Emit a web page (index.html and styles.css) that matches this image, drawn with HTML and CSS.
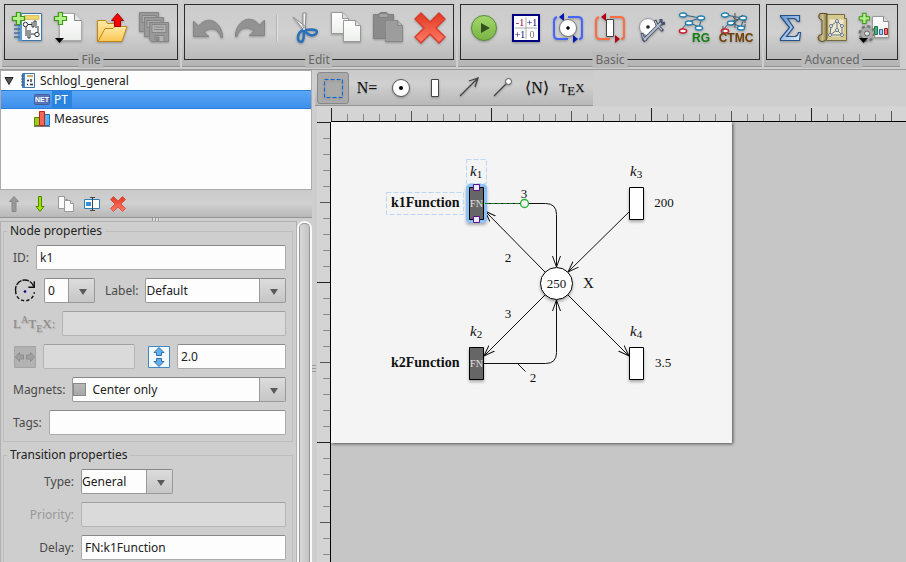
FILE: index.html
```html
<!DOCTYPE html>
<html lang="en">
<head>
<meta charset="utf-8">
<title>Schlogl_general</title>
<link rel="stylesheet" href="styles.css">
</head>
<body>
<svg class="defs" aria-hidden="true">
  <defs>
    <linearGradient id="gPaper" x1="0" y1="0" x2="0" y2="1"><stop offset="0" stop-color="#fff"/><stop offset="1" stop-color="#eceeec"/></linearGradient>
    <linearGradient id="gRed" x1="0" y1="0" x2="0" y2="1"><stop offset="0" stop-color="#e03a24"/><stop offset="1" stop-color="#ff7a66"/></linearGradient>
    <linearGradient id="gGreen" x1="0" y1="0" x2="0" y2="1"><stop offset="0" stop-color="#a4d86e"/><stop offset="1" stop-color="#78b442"/></linearGradient>
    <linearGradient id="gFolder" x1="0" y1="0" x2="0" y2="1"><stop offset="0" stop-color="#ffe9a6"/><stop offset="1" stop-color="#fbc652"/></linearGradient>
    <linearGradient id="gBlue" x1="0" y1="0" x2="1" y2="1"><stop offset="0" stop-color="#5f95d2"/><stop offset="1" stop-color="#e2eefa"/></linearGradient>
    <linearGradient id="gScroll" x1="0" y1="0" x2="1" y2="0"><stop offset="0" stop-color="#8b7d45"/><stop offset="0.5" stop-color="#cfc18c"/><stop offset="1" stop-color="#7d7140"/></linearGradient>
    <g id="plus"><path d="M4.500.5h4v4h4v4h-4v4h-4v-4h-4v-4h4z" fill="#b4f08a" stroke="#3f9a1c" stroke-width="1.200"/></g>
    <g id="cross"><path d="M7 1 16 10 25 1 31 7 22 16 31 25 25 31 16 22 7 31 1 25 10 16 1 7Z" fill="url(#gRed)" stroke="#d83a28" stroke-width="1.400" stroke-linejoin="round"/></g>
    <g id="pages"><path d="M.5.5h11l6 6v15H.5z" fill="url(#gPaper)" stroke="#999"/><path d="M11.500.5v6h6" fill="#ddd" stroke="#999"/><path d="M12.500 8.500h12l5 5v16h-17z" fill="url(#gPaper)" stroke="#999"/><path d="M24.500 8.500v5h5" fill="#ddd" stroke="#999"/></g>
    <g id="graph" fill="#fff"><path d="M6 4 22 7 10 11 3 19M10 11l11 5 3-9" fill="none" stroke="#33607c"/><ellipse cx="5" cy="4" rx="3.600" ry="2" stroke="#1f80b4" stroke-width="1.300"/><ellipse cx="23" cy="7" rx="3.600" ry="2" stroke="#1f80b4" stroke-width="1.300"/><ellipse cx="11" cy="12" rx="3.600" ry="2" stroke="#1f80b4" stroke-width="1.300"/><ellipse cx="21" cy="17" rx="3.600" ry="2" stroke="#1f80b4" stroke-width="1.300"/><ellipse cx="5" cy="20" rx="3.600" ry="2" stroke="#c8202c" stroke-width="1.500"/></g>
    <marker id="tip" viewBox="0 0 12 10" refX="11" refY="5" markerWidth="12" markerHeight="10" markerUnits="userSpaceOnUse" orient="auto"><path d="M0 1 11 5 0 9" fill="none" stroke="#111"/></marker>
    <filter id="soft" x="-50%" y="-30%" width="200%" height="180%"><feDropShadow dx="0" dy="2" stdDeviation="1.500" flood-color="#000" flood-opacity="0.3"/></filter>
  </defs>
</svg>

<header class="ribbon">
  <section class="group"><div class="box">
    <button class="tool" aria-label="New project"><svg viewBox="0 0 32 32"><path d="M6.500 1.500h23v27h-23z" fill="#f6f9fc" stroke="#3c74ac"/><path d="M6 1h4v28H6z" fill="#5f97cf"/><path d="M12 3.500h15v4H12z" fill="#f0d66c" stroke="#c8a838" stroke-width=".6"/><path d="M2 13h6M2 17h6M2 21h6M2 25h6" stroke="#3f6f9f" stroke-width="1.600"/><g fill="none" stroke="#333"><circle cx="13.500" cy="12.500" r="2.200"/><path d="M16 12.500h4m0-2.500v5h2V9h2v7m2-2v6M14 15v9m2-6v8h2v-8m1 4h4"/><circle cx="25" cy="22.500" r="2.200"/></g><use href="#plus"/></svg></button>
    <button class="tool" aria-label="New page"><svg viewBox="0 0 32 32"><path d="M5.500 1.500h15l7 7v20h-22z" fill="url(#gPaper)" stroke="#aaa"/><path d="M20.500 1.500v7h7" fill="#e4e4e4" stroke="#888"/><use href="#plus"/><path d="M1 26h9l-4.500 5z" fill="#000"/></svg></button>
    <button class="tool" aria-label="Open"><svg viewBox="0 0 32 32"><path d="M1.500 8.500h8l2 3h10v18h-20z" fill="url(#gFolder)" stroke="#bf8716"/><path d="M2 29.500 9 16.500h8l2-2h12l-5 15z" fill="url(#gFolder)" stroke="#bf8716" stroke-linejoin="round"/><path d="m21.500 1.500 6 7h-3v6h-6v-6h-3z" fill="#f00" stroke="#a00000"/></svg></button>
    <button class="tool" disabled aria-label="Save all"><svg viewBox="0 0 32 32" fill="#999" stroke="#858585"><path d="M1.500.5h19v19h-19z"/><path d="M4 3.500h14v7H4zM6 6h10M6 8h10" fill="#ababab"/><path d="M6.500 5.500h19v19h-19z"/><path d="M9 8.500h14v7H9zM11 11h10M11 13h10" fill="#ababab"/><path d="M11.500 10.500h19v19h-17l-2-2z"/><path d="M14 12.500h14v8H14zM16 15h10M16 17.500h10M17 23.500h9v6h-9z" fill="#b2b2b2"/><path d="M18 25h3v4h-3z" fill="#888"/></svg></button>
    <span class="caption">File</span></div></section>

  <section class="group"><div class="box">
    <button class="tool" disabled aria-label="Undo"><svg viewBox="0 0 32 32"><path d="M1.500 9v15.500H17L12 20c7-6 15-3 17 5.500h1.500C31 12 17 1 6.500 14z" fill="#929292" stroke="#858585"/></svg></button>
    <button class="tool" disabled aria-label="Redo"><svg viewBox="0 0 32 32"><path d="M30.500 8v15.500H15L20 19c-7-6-15-3-17 5.500H1.500C1 11 15 0 25.500 13z" fill="#929292" stroke="#858585"/></svg></button>
    <span class="sep"></span>
    <button class="tool" aria-label="Cut"><svg viewBox="0 0 32 32"><path d="M5 5 15 17l3-2zM15 1v14l2 2 1-16z" fill="#f4f4f4" stroke="#888" stroke-width=".9"/><path d="M16 18c-4 1-6 4-6 8s4 5 5 2 1-6 1-10zm0 0c3 4 7 6 10 5s4-4 1-5-7 0-11 0z" fill="none" stroke="#2c70b8" stroke-width="2.600"/><circle cx="16" cy="17" r="1" fill="#eee"/></svg></button>
    <button class="tool" aria-label="Copy"><svg viewBox="0 0 32 32"><use href="#pages" x="1"/></svg></button>
    <button class="tool" disabled aria-label="Paste"><svg viewBox="0 0 32 32"><path d="M1.500 2.500h7v-2h6v2h7v24h-20z" fill="#8b8b8b" stroke="#808080"/><path d="M7 1.500h9v4H7z" fill="#a4a4a4" stroke="#808080"/><path d="M13.500 8.500h12l5 5v16h-17z" fill="#9d9d9d" stroke="#888"/><path d="M25.500 8.500v5h5" fill="#b0b0b0" stroke="#888"/></svg></button>
    <button class="tool" aria-label="Delete"><svg viewBox="0 0 32 32"><use href="#cross"/></svg></button>
    <span class="caption">Edit</span></div></section>

  <section class="group"><div class="box">
    <button class="tool" aria-label="Play"><svg viewBox="0 0 32 32"><circle cx="16" cy="16" r="12.500" fill="url(#gGreen)" stroke="#5b8a38"/><path d="m13 11 9 5-9 5z" fill="#35501f"/></svg></button>
    <button class="tool" aria-label="Incidence matrix"><svg viewBox="0 0 32 32"><path d="M3 3h26v26H3z" fill="#fff" stroke="#000080" stroke-width="2"/><path d="M16 5v22M5 16h22" stroke="#aaa"/><g class="matrix"><text x="10" y="14" fill="#900028">-1</text><text x="22" y="14" fill="#000080">+1</text><text x="10" y="26" fill="#000080">+1</text><text x="22" y="26" fill="#777">0</text></g></svg></button>
    <button class="tool" aria-label="Place invariants"><svg viewBox="0 0 32 32"><g fill="none" stroke="#4565ff" stroke-width="2"><path d="M16 5h10q4 0 4 4v15q0 3-3 3M16 27H6q-4 0-4-4V9q0-3 3-4"/></g><path d="m7 5 5-4v8zM26 27l-5-4v8z" fill="#0018b0"/><circle cx="16" cy="16" r="8.500" fill="#fff" stroke="#777"/><circle cx="16" cy="16" r="1.800"/></svg></button>
    <button class="tool" aria-label="Transition invariants"><svg viewBox="0 0 32 32"><g fill="none" stroke="#ff6d40" stroke-width="2"><path d="M16 5h10q4 0 4 4v15q0 3-3 3M16 27H6q-4 0-4-4V9q0-3 3-4"/></g><path d="m7 5 5-4v8zM26 27l-5-4v8z" fill="#b00010"/><path d="M12.500 7.500h7v17h-7z" fill="#fff" stroke="#444"/></svg></button>
    <button class="tool" aria-label="Measure"><svg viewBox="0 0 32 32" fill="none"><circle cx="12" cy="15" r="8.500" fill="#fff" stroke="#999"/><circle cx="12" cy="15" r="1.800" fill="#222"/><g stroke="#46506a" stroke-width="3.600"><path d="M7 29 25 11"/><path d="m19 8 2 5 6 6M6 21l1 4 4 3M25 11v-4M25 12l4-1" stroke-width="3"/></g><g stroke="#b5bfcf" stroke-width="1.800"><path d="M8 28 25 11"/><path d="m19 9 2 4 5 5M6 22l1 3 3 3" stroke-width="1.200"/></g></svg></button>
    <button class="tool" aria-label="Reachability graph"><svg viewBox="0 0 32 32"><use href="#graph" y="-1"/><text class="tag" x="23" y="30" fill="#108010">RG</text></svg></button>
    <button class="tool" aria-label="Markov chain"><svg viewBox="0 0 32 32"><use href="#graph" y="-1"/><path d="M15 1v15M12 13l11-10M3 14v8M25 8v8M13 5l5 4" fill="none" stroke="#555" stroke-dasharray="3 1"/><text class="tag" x="16" y="30" fill="#704008">CTMC</text></svg></button>
    <span class="caption">Basic</span></div></section>

  <section class="group"><div class="box">
    <button class="tool" aria-label="Sum"><svg viewBox="0 0 32 32"><path d="M6.500 3.500h19v6h-2q-1-3-4-3h-6l6 9-7 9h8q3 0 4-4h2l-1 8h-19v-2l9-11-9-11z" fill="url(#gBlue)" stroke="#28528a" stroke-width="1.200"/></svg></button>
    <button class="tool" aria-label="Blueprint"><svg viewBox="0 0 32 32"><path d="M7.500 2.500h21v4h2v22h-20z" fill="#d6c98f" stroke="#776a3c"/><path d="M4 1.500h7v25q-1 3-5 3-4 0-4-4 0-3 4-3V8q-4-1-3-5 0-1 1-1.500z" fill="url(#gScroll)" stroke="#594f2c"/><path d="M13.500 7.500h14v17h-14z" fill="#eee8d0"/><g fill="none" stroke="#667580"><path d="m14 23 1-9 6-5 5 5v9zM21 9v9l-7 5m7-5 5 5"/><g fill="#fff"><circle cx="21" cy="9" r="1.500"/><circle cx="15" cy="14" r="1.500"/><circle cx="26" cy="14" r="1.500"/><circle cx="14" cy="23" r="1.500"/><circle cx="26" cy="23" r="1.500"/><circle cx="21" cy="18" r="1.500"/></g></g></svg></button>
    <button class="tool" aria-label="Add measures"><svg viewBox="0 0 32 32"><path d="M14.500 4.500h11l5 5v16h-16z" fill="url(#gPaper)" stroke="#999"/><path d="M25.500 4.500v5h5" fill="#ddd" stroke="#888"/><path d="M16.500 14.500h3v8h-3z" fill="#45b078" stroke="#187848"/><path d="M21.500 17.500h3v5h-3z" fill="#a8ccf0" stroke="#2868a8"/><path d="M26.500 16.500h3v6h-3z" fill="#e87878" stroke="#a02020"/><use href="#plus" x="1" y="1" transform="scale(.85)"/><circle cx="9" cy="21.500" r="7" fill="#a5a5a5" stroke="#777" stroke-width="3" stroke-dasharray="3 2.500"/><circle cx="9" cy="21.500" r="6" fill="#aaa"/><circle cx="9" cy="21.500" r="2.500" fill="#ddd" stroke="#666"/><path d="M1 26h9l-4.500 5z"/></svg></button>
    <span class="caption">Advanced</span></div></section>
</header>

<main class="workspace">
  <aside class="side">
    <ul class="tree">
      <li class="node root"><svg class="twisty" viewBox="0 0 10 10"><path d="M1 1.500h8L5 8.500z" fill="#555" stroke="#222"/></svg><svg class="ico" viewBox="0 0 16 16"><path d="M2.500.5h12v14h-12z" fill="#f4f8fc" stroke="#3c74ac"/><path d="M3 1h2v13H3z" fill="#4b86c2"/><path d="M7 3h6" stroke="#c8b068" stroke-width="2"/><path d="M1 3h3M1 6h3M1 9h3M1 12h3" stroke="#2f5f90"/><path d="M7 7.500h2m2-1.500v3M7 11.500h1m2 0h3" stroke="#333" stroke-width="1.400"/></svg><span class="name">Schlogl_general</span></li>
      <li class="node child selected"><svg class="ico" viewBox="0 0 16 16"><rect y="2.500" x=".5" width="15" height="10" rx="1" fill="#5873b8" stroke="#445c98"/><text class="net" x="8" y="10">NET</text></svg><span class="name">PT</span></li>
      <li class="node child"><svg class="ico" viewBox="0 0 16 16"><path d="M.5 6.500h5v8h-5z" fill="#9ccc20" stroke="#588800"/><path d="M10.500 3.500h5v11h-5z" fill="#56b4f0" stroke="#1a70b0"/><path d="M5.500.5h5v14h-5z" fill="#f06858" stroke="#c02018"/><path d="M0 15.500h16" stroke="#777"/></svg><span class="name">Measures</span></li>
    </ul>
    <div class="strip">
      <button class="mini" disabled aria-label="Move up"><svg viewBox="0 0 16 16"><path d="m8 .5 4.500 5H10v10H6v-10H3.500z" fill="#999" stroke="#888"/></svg></button>
      <button class="mini" aria-label="Move down"><svg viewBox="0 0 16 16"><path d="m8 15.500 4-5H9.500V.5h-3v10H4z" fill="#a4e000" stroke="#4a8a00"/></svg></button>
      <button class="mini" aria-label="Duplicate"><svg viewBox="0 0 16 16" stroke="#999"><path d="M.5.5h6l3 3v9h-9z" fill="#fafafa"/><path d="M6.500.5v3h3" fill="#ddd"/><path d="M6.500 4.500h6l3 3v8h-9z" fill="#fafafa"/><path d="M12.500 4.500v3h3" fill="#ddd"/></svg></button>
      <button class="mini" aria-label="Rename"><svg viewBox="0 0 16 16"><path d="M.5 3.500h15v9H.5z" fill="#fff" stroke="#2c80b8"/><path d="M2 6h5v4H2z" fill="#3390dc"/><path d="M6 1.500h5M6 14.500h5M8.500 1.500v13" stroke="#444"/></svg></button>
      <button class="mini" aria-label="Remove"><svg viewBox="0 0 32 32"><use href="#cross"/></svg></button>
    </div>
    <div class="grip"></div>
    <div class="props">
      <form class="sheet">
        <fieldset>
          <legend>Node properties</legend>
          <div class="row"><label for="id">ID:</label><input id="id" class="grow" value="k1"></div>
          <div class="row"><svg class="rot" viewBox="0 0 22 22" role="img" aria-label="Rotation"><path d="M19 7A8.500 8.500 0 0 0 2.500 11" fill="none" stroke="#111" stroke-width="1.300" stroke-dasharray="6 1"/><path d="M2.500 11A8.500 8.500 0 1 0 19.500 12" fill="none" stroke="#111" stroke-width="1.300" stroke-dasharray="3 2"/><path d="M19.500 2v5.500H14" fill="none" stroke="#111" stroke-width="1.300"/><circle cx="11" cy="11.500" r="1.200" fill="#000080"/></svg><span class="combo rotation"><select aria-label="Rotation"><option>0</option></select></span><label class="mid" for="lab">Label:</label><span class="combo flush grow"><select id="lab"><option>Default</option></select></span></div>
          <div class="row"><label class="latex" for="tex">L<sup>A</sup>T<sub>E</sub>X:</label><input id="tex" class="grow" disabled></div>
          <div class="row sizes"><svg class="dim" viewBox="0 0 22 22"><path d="M.5.5h21v21H.5z" fill="#b2b2b2" stroke="#a4a4a4"/><path d="m1.500 11 4-4.500V9h4v4h-4v2.500zM20.500 11l-4-4.500V9h-4v4h4v2.500z" fill="#a0a0a0" stroke="#8c8c8c"/></svg><input class="half" disabled aria-label="Width"><svg class="dim" viewBox="0 0 22 22"><path d="M.5.5h21v21H.5z" fill="#f5f9fc" stroke="#3c88c8"/><path d="m11 1.500 5 5h-2.500v3h-5v-3H6zM11 20.500l5-5h-2.500v-3h-5v3H6z" fill="#64b0ea" stroke="#2c70ac"/></svg><input class="grow" value="2.0" aria-label="Height"></div>
          <div class="row"><label for="mag">Magnets:</label><span class="combo swatched grow"><select id="mag"><option>Center only</option></select></span></div>
          <div class="row"><label for="tags">Tags:</label><input id="tags" class="grow"></div>
        </fieldset>
        <fieldset class="second">
          <legend>Transition properties</legend>
          <div class="row"><label class="col" for="type">Type:</label><span class="combo flush type"><select id="type"><option>General</option></select></span></div>
          <div class="row"><label class="col off" for="prio">Priority:</label><input id="prio" class="grow" disabled></div>
          <div class="row"><label class="col" for="delay">Delay:</label><input id="delay" class="grow" value="FN:k1Function"></div>
        </fieldset>
      </form>
      <div class="bar"><div class="thumb"></div></div>
    </div>
  </aside>
  <div class="divider"></div>
  <section class="editor">
    <div class="palette">
      <button class="pick on" aria-label="Select"><svg viewBox="0 0 24 24"><path d="M3.500 3.500h18v18h-18z" fill="none" stroke="#0a6ad8" stroke-dasharray="4 2"/></svg></button>
      <button class="pick">N=</button>
      <button class="pick" aria-label="Place"><svg viewBox="0 0 24 24"><circle cx="12" cy="12" r="8.500" fill="#fff" stroke="#555"/><circle cx="12" cy="12" r="2"/></svg></button>
      <button class="pick" aria-label="Transition"><svg viewBox="0 0 24 24"><path d="M8.500 3.500h7v17h-7z" fill="#fff" stroke="#444"/></svg></button>
      <button class="pick" aria-label="Arc"><svg viewBox="0 0 24 24"><path d="M3 20 21 2M12 5l9-3-3 9" fill="none" stroke="#444" stroke-width="1.300"/></svg></button>
      <button class="pick" aria-label="Inhibitor arc"><svg viewBox="0 0 24 24"><path d="M3 20 15 8" stroke="#444" stroke-width="1.300"/><circle cx="17.500" cy="5.500" r="3" fill="#fff" stroke="#555"/></svg></button>
      <button class="pick">⟨N⟩</button>
      <button class="pick tex"><span>T<sub>E</sub>X</span></button>
    </div>
    <div class="board">
      <div class="corner"></div>
      <svg class="ruler-x" aria-hidden="true"><defs><pattern id="tx" width="160" height="16" patternUnits="userSpaceOnUse"><path d="M.5 2v14" stroke="#222"/><path d="M80.500 5v11" stroke="#555"/><path d="M16.500 8v8m16-8v8m16-8v8m16-8v8m32-8v8m16-8v8m16-8v8m16-8v8" stroke="#888"/></pattern></defs><rect width="100%" height="16" fill="url(#tx)"/></svg>
      <svg class="ruler-y" aria-hidden="true"><defs><pattern id="ty" width="14" height="160" patternUnits="userSpaceOnUse"><path d="M0 .5h14" stroke="#222"/><path d="M3 80.500h11" stroke="#555"/><path d="M6 16.500h8m-8 16h8m-8 16h8m-8 16h8m-8 32h8m-8 16h8m-8 16h8m-8 16h8" stroke="#888"/></pattern></defs><rect width="14" height="100%" fill="url(#ty)"/></svg>
      <div class="canvas">
        <svg class="sheet-paper" width="401" height="321" viewBox="0 0 401 321" role="img" aria-label="Petri net">
          <g fill="none" stroke="#111">
            <path d="M153 81.500H214.500Q225.500 81.500 225.500 92.500V145" marker-end="url(#tip)"/>
            <path d="M153 241.500H214.500Q225.500 241.500 225.500 230.500V178" marker-end="url(#tip)"/>
            <path d="M214 150 154 89" marker-end="url(#tip)"/>
            <path d="M299 89 237 150" marker-end="url(#tip)"/>
            <path d="M214 173 153 234" marker-end="url(#tip)"/>
            <path d="M237 173 298 234" marker-end="url(#tip)"/>
            <path d="m186.500 241.500 8 8"/>
          </g>
          <g filter="url(#soft)" stroke="#000">
            <circle cx="225.500" cy="161.500" r="16" fill="#fff"/>
            <path d="M298.500 65.500h14v32h-14zM298.500 225.500h14v32h-14z" fill="#fff"/>
            <path d="M138.500 225.500h14v32h-14z" fill="#666"/>
          </g>
          <rect x="135" y="62" width="21" height="39" rx="4" fill="#8cc0f8" filter="url(#soft)"/>
          <path d="M138.500 65.500h14v32h-14z" fill="#666" stroke="#000"/>
          <path d="M148 81.500h42" stroke="#087818" stroke-dasharray="4 2"/>
          <circle cx="193.500" cy="81.500" r="4" fill="#f4f4f4" stroke="#22b030" stroke-width="1.300"/>
          <g fill="#ececff" stroke="#58108c"><path d="M142.500 62.500h6v6h-6zM142.500 94.500h6v6h-6z"/></g>
          <g fill="none" stroke="#bcd6f5" stroke-dasharray="5 2"><path d="M135.500 37.500h20v24h-20zM55.500 70.500h77v22h-77z"/></g>
          <g class="fn"><text x="145.500" y="85">FN</text><text x="145.500" y="245">FN</text></g>
          <g class="num"><text x="193" y="76">3</text><text x="177" y="140">2</text><text x="177" y="196">3</text><text x="202" y="260">2</text><text x="225.500" y="166">250</text><text x="333" y="85">200</text><text x="332" y="245">3.5</text></g>
          <g class="sym"><text x="139" y="54"><tspan class="k">k</tspan><tspan class="sub" dy="2">1</tspan></text><text x="139" y="214"><tspan class="k">k</tspan><tspan class="sub" dy="2">2</tspan></text><text x="299" y="54"><tspan class="k">k</tspan><tspan class="sub" dy="2">3</tspan></text><text x="299" y="214"><tspan class="k">k</tspan><tspan class="sub" dy="2">4</tspan></text><text x="252" y="166">X</text></g>
          <g class="func"><text x="60" y="85">k1Function</text><text x="60" y="245">k2Function</text></g>
        </svg>
      </div>
    </div>
  </section>
</main>
</body>
</html>
```
FILE: styles.css
```css
* { box-sizing: border-box; }
body {
  margin: 0;
  height: 100vh;
  display: flex;
  flex-direction: column;
  overflow: hidden;
  background: #cecece;
  color: #222;
  font: 12px/16px "Noto Sans", sans-serif;
}
button, input, select { font: inherit; color: inherit; margin: 0; }
button { padding: 0; border: 0; background: none; }
.defs { position: absolute; width: 0; height: 0; }

/* Main toolbar */
.ribbon {
  flex: none;
  display: flex;
  gap: 2px;
  padding: 0 2px 2px;
  border-bottom: 1px solid #999;
}
.group {
  padding: 4px 2px 6px;
  background: linear-gradient(#cbcbcb, #d0d0d0 50%, #b4b4b4);
  border-bottom: 1px solid #949494;
}
.box {
  position: relative;
  display: flex;
  align-items: flex-start;
  height: 56px;
  padding: 2px;
  border: 1px solid #2c2c2c;
}
.tool { width: 42px; height: 42px; display: grid; place-items: center; }
.tool svg { width: 32px; height: 32px; overflow: visible; filter: drop-shadow(0 1px 1px #0004); }
.sep { width: 2px; height: 26px; margin: 8px 5px; background: #e2e2e2; border-left: 1px solid #b4b4b4; }
.caption {
  position: absolute;
  bottom: -9px;
  left: 50%;
  transform: translateX(-50%);
  padding: 0 3px;
  background: #bababa;
  color: #666;
}
.tag { font: bold 12px "Liberation Sans", sans-serif; text-anchor: middle; }
.matrix { font: 10px "Liberation Serif", serif; text-anchor: middle; }

/* Main split */
.workspace { flex: 1; min-height: 0; display: flex; }
.side { flex: 0 0 312px; display: flex; flex-direction: column; min-width: 0; }
.tree {
  height: 120px;
  flex: none;
  margin: 0;
  padding: 0;
  list-style: none;
  background: #fdfdfd;
  border: 1px solid #aaa;
}
.node { display: flex; align-items: center; height: 19px; }
.ico { width: 16px; height: 16px; margin-right: 2px; }
.twisty { width: 10px; height: 10px; margin: 0 6px 0 3px; }
.child { padding-left: 33px; }
.name { padding: 0 2px; line-height: 17px; }
.selected {
  background: linear-gradient(#5aa6f6, #3d8fea);
  border: solid #2c80d8;
  border-width: 1px 0;
  color: #fff;
}
.selected .name { background: #2b83e0; padding-right: 4px; }
.net { font: bold 7px "Liberation Sans", sans-serif; fill: #fff; text-anchor: middle; }
.strip {
  flex: none;
  display: flex;
  align-items: center;
  gap: 2px;
  height: 28px;
  padding: 0 2px;
  background: linear-gradient(#cacaca, #d0d0d0 50%, #b8b8b8);
  border-bottom: 1px solid #949494;
}
.mini { width: 24px; height: 24px; display: grid; place-items: center; }
.mini svg { width: 16px; height: 16px; }
.grip { flex: none; height: 3px; width: 8px; margin: 0 auto; background: repeating-linear-gradient(90deg, #999 0 1px, #ddd 1px 3px); }

/* Property sheet */
.props { flex: 1; min-height: 0; display: flex; }
.sheet {
  flex: 1;
  min-width: 0;
  overflow: hidden;
  padding: 1px 3px 0 2px;
  border: solid #b0b0b0;
  border-width: 1px 1px 0;
}
fieldset {
  min-width: 0;
  margin: 0;
  padding: 6px 6px 6px 9px;
  border: 1px solid #bdbdbd;
  display: flex;
  flex-direction: column;
  gap: 8px;
}
legend { padding: 0 3px; margin-left: -6px; }
.second { margin-top: 5px; }
.row { display: flex; align-items: center; gap: 7px; height: 25px; color: #4a4a4a; }
.grow { flex: 1; min-width: 0; }
input {
  width: 0;
  height: 25px;
  padding: 0 3px;
  background: #fdfdfd;
  border: 1px solid #aaa;
  border-top-color: #888;
  border-radius: 2px;
  color: #222;
}
input:disabled { background: #dadada; border-color: #b4b4b4; border-top-color: #a0a0a0; }
.combo { position: relative; display: flex; height: 25px; }
.combo select {
  flex: 1;
  min-width: 0;
  appearance: none;
  padding: 0 27px 0 3px;
  background: #fdfdfd;
  border: 1px solid #999;
  border-top-color: #888;
  border-radius: 2px;
  color: #222;
}
.combo::before {
  content: "";
  position: absolute;
  inset: 1px 1px 1px auto;
  width: 25px;
  background: linear-gradient(#dcdcdc, #c6c6c6);
  border-left: 1px solid #999;
  pointer-events: none;
}
.combo::after {
  content: "";
  position: absolute;
  right: 8px;
  top: 11px;
  border: 4px solid transparent;
  border-top: 6px solid #5a5a5a;
  border-bottom: 0;
  pointer-events: none;
}
.combo.flush select { padding-left: 0; }
.combo.swatched select {
  padding-left: 19px;
  background: linear-gradient(#b8b8b8, #a8a8a8) 1px 6px / 11px 11px no-repeat, linear-gradient(#888, #888) 0 5px / 13px 13px no-repeat, #fdfdfd;
}
.rotation { width: 51px; }
.type { width: 92px; }
.mid { margin: 0 0 0 3px; }
.rot { width: 24px; height: 24px; }
.dim { width: 22px; height: 22px; margin-left: 1px; }
.half { width: 92px; }
.half + .dim { margin-left: 6px; }
.col { width: 61px; text-align: right; }
.off { color: #999; }
.latex { font: 13px/16px "Liberation Serif", serif; color: #888; text-shadow: 1px 1px 1px #aaa; }
.latex sup, .latex sub { font-size: 10px; line-height: 0; }
.bar { width: 15px; padding: 2px 2px 0; background: #fafafa; border-radius: 8px 8px 0 0; }
.thumb { height: 100%; background: linear-gradient(90deg, #d8d8d8, #c4c4c4); border: 1px solid #999; border-bottom: 0; border-radius: 5px 5px 0 0; }
.divider {
  flex: 0 0 5px;
  background: linear-gradient(#999 0 0) 0 295px / 4px 1px no-repeat, linear-gradient(#999 0 0) 0 298px / 4px 1px no-repeat, linear-gradient(#999 0 0) 0 301px / 4px 1px no-repeat, #cecece;
}

/* Editor */
.editor { flex: 1; min-width: 0; display: flex; flex-direction: column; align-items: stretch; }
.palette {
  align-self: flex-start;
  flex: none;
  display: flex;
  gap: 2px;
  margin-left: -2px;
  padding: 2px 6px 1px 2px;
  background: linear-gradient(#cacaca, #d0d0d0 40%, #b8b8b8);
  border-bottom: 1px solid #949494;
}
.pick {
  width: 32px;
  height: 32px;
  display: flex;
  align-items: center;
  justify-content: center;
  font: 16px/24px "Liberation Serif", serif;
  color: #111;
  text-shadow: 0 1px 1px #0004;
}
.pick svg { width: 24px; height: 24px; filter: drop-shadow(0 1px 1px #0004); }
.on { background: #aaa; border: 1px solid #888; border-radius: 3px; }
.palette .tex { font-size: 13px; padding-left: 2px; }
.tex sub { font-size: 13px; line-height: 0; vertical-align: -3px; }
.board { flex: 1; min-height: 0; display: grid; grid-template: 16px 1fr / 14px 1fr; background: #d4d4d4; }
.ruler-x { width: 100%; height: 16px; border-bottom: 1px solid #000; }
.ruler-y { width: 14px; height: 100%; border-right: 1px solid #000; }
.canvas { min-width: 0; overflow: hidden; background: #c6c6c6; }
.sheet-paper { display: block; background: #f4f4f4; box-shadow: 1px 1px 3px #0009; }
.sheet-paper text { font-family: "Liberation Serif", serif; fill: #111; }
.num { font-size: 13px; text-anchor: middle; }
.sheet-paper .fn text { font-size: 10px; text-anchor: middle; fill: #e4e4e4; }
.sym { font-size: 15px; }
.k { font-style: italic; }
.sub { font-size: 11px; }
.func { font-size: 14px; font-weight: bold; }
```
